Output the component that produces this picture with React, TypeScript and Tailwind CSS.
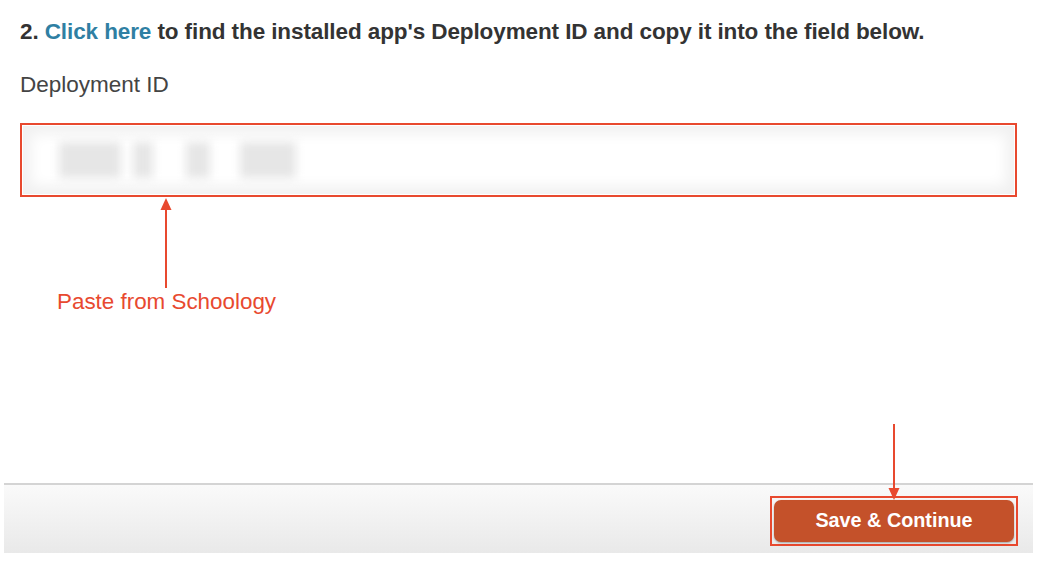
import React from "react"

const RED = "#e8492f"

function UpArrow() {
	return (
		<svg width="14" height="90" viewBox="0 0 14 90" className="block">
			<polygon points="7,0 1.5,12 12.5,12" fill={RED} />
			<line x1="7" y1="10" x2="7" y2="90" stroke={RED} strokeWidth="2" />
		</svg>
	)
}

function DownArrow() {
	return (
		<svg width="14" height="76" viewBox="0 0 14 76" className="block">
			<line x1="7" y1="0" x2="7" y2="66" stroke={RED} strokeWidth="2" />
			<polygon points="7,76 1.5,64 12.5,64" fill={RED} />
		</svg>
	)
}

// the pasted id is blurred out in the screenshot
const blurBlobs = [
	{ w: "w-[62px]", key: "a" },
	{ w: "w-[20px]", key: "b" },
	{ w: "w-[24px]", key: "c" },
	{ w: "w-[56px]", key: "d" },
]

export default function App() {
	return (
		<div className="flex h-[575px] w-[1048px] flex-col bg-white font-['Liberation_Sans',Arial,sans-serif]">
			<div className="px-5 pt-[20px]">
				<p className="text-[22.5px] font-bold leading-6 tracking-[-0.1px] text-[#333]">
					2. <a className="text-[#2f7fa3]">Click here</a> to find the installed app's Deployment ID and copy it into the field below.
				</p>
				<div className="mt-[29px] text-[22.5px] leading-6 text-[#444]">Deployment ID</div>

				<div className="mt-[26px] h-[74px] w-[997px] border-2 border-[#e8492f] bg-white p-[1px]">
					<div className="flex h-full w-full items-center gap-[12px] overflow-hidden bg-white pl-[36px] shadow-[inset_0_0_14px_8px_#f1f1f1]">
						{blurBlobs.map((b, i) => (
							<div
								key={b.key}
								className={`h-[36px] ${b.w} bg-[#e6e6e6] blur-[5px] ${i === 2 ? "ml-[21px]" : ""} ${i === 3 ? "ml-[18px]" : ""}`}
							/>
						))}
					</div>
				</div>

				<div className="ml-[139px] mt-[1px]">
					<UpArrow />
				</div>
				<div className="ml-[37px] mt-[2px] text-[22.4px] leading-6 text-[#e8492f]">Paste from Schoology</div>
			</div>

			<div className="mt-auto mb-[22px] ml-[4px] flex h-[70px] w-[1029px] items-center justify-end border-t-2 border-[#d4d4d4] bg-gradient-to-b from-[#fafafa] to-[#e9e9e9] pr-[15px] pt-[4px]">
				<div className="relative border-2 border-[#e8492f] p-[2px]">
					<div className="absolute bottom-[calc(100%-2px)] left-1/2 -translate-x-1/2">
						<DownArrow />
					</div>
					<button className="flex h-[42px] w-[240px] items-center justify-center rounded-[7px] bg-[#c4512a] text-[19.8px] font-bold text-white shadow-[0_1px_2px_rgba(0,0,0,0.3)]">
						Save &amp; Continue
					</button>
				</div>
			</div>
		</div>
	)
}
